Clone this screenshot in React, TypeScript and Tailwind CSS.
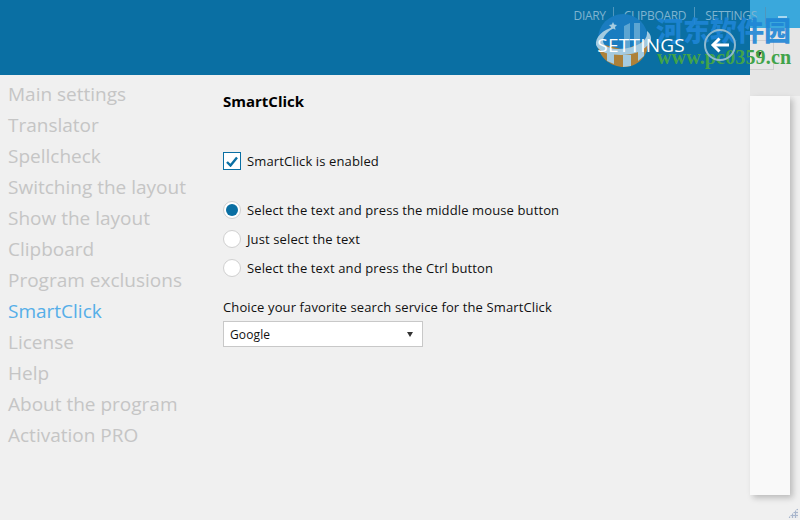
import React from 'react';

const menu = [
  'Main settings',
  'Translator',
  'Spellcheck',
  'Switching the layout',
  'Show the layout',
  'Clipboard',
  'Program exclusions',
  'SmartClick',
  'License',
  'Help',
  'About the program',
  'Activation PRO',
];

const radios = [
  { label: 'Select the text and press the middle mouse button', checked: true },
  { label: 'Just select the text', checked: false },
  { label: 'Select the text and press the Ctrl button', checked: false },
];

const Watermark: React.FC = () => (
  <div className="absolute left-0 top-0 w-[800px] h-[80px] pointer-events-none">
    <svg className="absolute left-[595px] top-[14px]" width="60" height="54" viewBox="0 0 60 54">
      <circle cx="28" cy="25" r="25" fill="#1a7cc0" />
      <path d="M2 29 C4 44 16 53 29 53 C42 53 53 44 55 24 L30 36 Z" fill="#ad8139" />
      <path d="M12 36 L12 47 L19 50 L19 39 Z M28 41 L28 53 L36 52 L36 41 Z M43 36 L43 47 L49 42 L49 32 Z" fill="#a5cbe0" />
      <path d="M29 12 L35 9 L35 34 L29 36 Z M39 9 L45 9 L45 32 L39 34 Z" fill="#5da5d2" />
      <path d="M1 31 C0 24 7 15 20 13 C10 19 6 25 9 30 C13 36 27 36 37 33 C47 30 53 25 52 17 C56 20 57 25 55 28 C50 37 38 41 26 41 C14 41 4 38 1 31 Z" fill="#a5cbe0" />
      <path d="M18 8l1.2 2.6 2.8.3-2 2 .5 2.8-2.5-1.3-2.5 1.3.5-2.8-2-2 2.8-.3z" fill="#a5cbe0" />
    </svg>
    <div className="absolute left-[656px] top-[12px] font-['Noto_Sans_CJK_SC',sans-serif] text-[27px] leading-[36px] font-black text-[#1f86d6] opacity-90 whitespace-nowrap">
      河东软件园
    </div>
    <div className="absolute left-[657px] top-[47px] font-['Liberation_Serif',serif] text-[20px] leading-[20px] font-bold text-[#41a34a] tracking-[0.15px] whitespace-nowrap">
      www.pc0359.cn
    </div>
  </div>
);

export default function App() {
  return (
    <div className="relative w-[800px] h-[520px] overflow-hidden flex bg-[#f0f0f0] font-['Open_Sans',sans-serif]">
      <div className="w-[750px] h-full flex flex-col shrink-0">
        <header className="h-[75px] bg-[#0a6fa3] flex flex-col items-end">
          <nav className="relative z-10 h-[30px] pt-[7px] -mr-[16px] flex items-start text-[12px] leading-[17px] tracking-[-0.3px] text-[#7fb4d0]">
            <span className="pr-[7px] border-r border-[#4f97bd]">DIARY</span>
            <span className="pl-[10px] pr-2 border-r border-[#4f97bd]">CLIPBOARD</span>
            <span className="pl-[10px] pr-2 border-r border-[#4f97bd]">SETTINGS</span>
          </nav>
          <div className="relative z-30 flex items-center pr-[14px] -mt-[1px] gap-[19px]">
            <span className="text-[19px] leading-[30px] tracking-[0.25px] text-white">SETTINGS</span>
            <span className="w-[32px] h-[32px] rounded-full border-2 border-[#8fb9cf] flex items-center justify-center">
              <svg width="20" height="16" viewBox="0 0 20 16" fill="none" stroke="white" strokeWidth="3">
                <path d="M19 8H3" />
                <path d="M9.5 1.5L3 8l6.5 6.5" />
              </svg>
            </span>
          </div>
        </header>
        <div className="flex flex-1">
          <ul className="w-[223px] pt-[4px] pl-[8px] shrink-0">
            {menu.map((item) => (
              <li
                key={item}
                className={`h-[31px] text-[19px] leading-[31px] whitespace-nowrap ${
                  item === 'SmartClick' ? 'text-[#55aee8]' : 'text-[#c5c5c5]'
                }`}
              >
                {item}
              </li>
            ))}
          </ul>
          <main className="flex-1 text-[13px] leading-[18px] tracking-[0.12px] text-[#111]">
            <h2 className="text-[15px] leading-[20px] font-bold text-black mt-[16px] tracking-normal">SmartClick</h2>
            <label className="flex items-center gap-[6px] mt-[41px] h-[18px]">
              <span className="w-[18px] h-[18px] bg-white border border-[#0a6fa3] flex items-center justify-center">
                <svg width="12" height="11" viewBox="0 0 12 11" fill="none" stroke="#0a6fa3" strokeWidth="2.4">
                  <path d="M1 6l3.5 3.5L11 1.5" />
                </svg>
              </span>
              SmartClick is enabled
            </label>
            <div className="mt-[30px] flex flex-col gap-[9px]">
              {radios.map((r) => (
                <label key={r.label} className="flex items-center gap-[6px] h-[20px]">
                  <span className="w-[18px] h-[18px] rounded-full bg-white border border-[#d0d0d0] flex items-center justify-center">
                    {r.checked && <span className="w-[12px] h-[12px] rounded-full bg-[#0a6fa3]" />}
                  </span>
                  {r.label}
                </label>
              ))}
            </div>
            <p className="mt-[20px]">Choice your favorite search service for the SmartClick</p>
            <div className="mt-[5px] w-[200px] h-[26px] bg-white border border-[#c8c8c8] flex items-center justify-between pl-[6px] pr-[9px] pt-[1px] text-[12px]">
              Google
              <span className="w-0 h-0 border-x-[3.5px] border-x-transparent border-t-[5px] border-t-[#333]" />
            </div>
          </main>
        </div>
      </div>

      <div className="flex-1 flex flex-col">
        <div className="h-[28px] bg-[#3aa8dc] pt-[16px] pl-[28px]">
          <div className="w-[9px] h-[2px] bg-[#a8d8f0]" />
        </div>
        <div className="h-[68px] bg-[#e6e6e6] pt-[12px]">
          <div className="relative w-[24px] h-[30px] border border-l-0 border-[#cfcfcf]">
            <span className="absolute left-[6px] top-[11px] w-0 h-0 border-x-[3.5px] border-x-transparent border-t-[5px] border-t-[#333]" />
          </div>
        </div>
        <div className="w-[40px] h-[399px] bg-[#f9f9f9] shadow-[3px_3px_6px_rgba(0,0,0,0.22)]" />
        <div className="relative flex-1">
          <div className="absolute right-[2px] bottom-[2px] w-[10px] h-[10px] bg-[radial-gradient(#a9b6cc_1px,transparent_1.5px)] bg-[length:3px_3px] [clip-path:polygon(100%_0,100%_100%,0_100%)]" />
        </div>
      </div>

      <div className="absolute left-0 top-0 w-full z-20">
        <Watermark />
      </div>
    </div>
  );
}
